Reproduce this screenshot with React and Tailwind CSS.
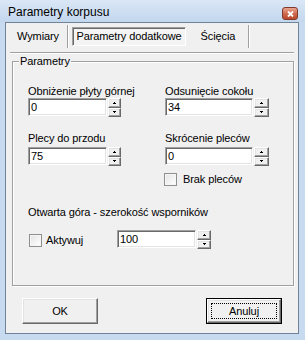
// Parametry korpusu – klasyczne okno dialogowe
const raised =
  "border border-t-white border-l-white border-r-[#696969] border-b-[#696969] shadow-[inset_-1px_-1px_0_#a0a0a0,inset_1px_1px_0_#e3e3e3]";

function Arrow({ up }) {
  return (
    <svg width="3" height="2" viewBox="0 0 3 2" shapeRendering="crispEdges">
      {up ? (
        <>
          <rect x="1" y="0" width="1" height="1" fill="#000" />
          <rect x="0" y="1" width="3" height="1" fill="#000" />
        </>
      ) : (
        <>
          <rect x="0" y="0" width="3" height="1" fill="#000" />
          <rect x="1" y="1" width="1" height="1" fill="#000" />
        </>
      )}
    </svg>
  );
}

function Spin({ value, editW, spinW, className = "" }) {
  return (
    <div className={"flex items-start gap-[1px] " + className}>
      <div
        className={
          editW +
          " h-[18px] flex items-center pl-[2px] bg-white border border-t-[#a0a0a0] border-l-[#a0a0a0] border-b-white border-r-white shadow-[inset_1px_1px_0_#696969,inset_-1px_-1px_0_#e3e3e3]"
        }
      >
        {value}
      </div>
      <div className={spinW + " h-[19px] flex flex-col"}>
        <div className={"flex-1 flex items-center justify-center bg-[#f0f0f0] " + raised}>
          <Arrow up />
        </div>
        <div className={"flex-1 flex items-center justify-center bg-[#f0f0f0] " + raised}>
          <Arrow />
        </div>
      </div>
    </div>
  );
}

function Check({ label, gap }) {
  return (
    <div className={"flex items-center " + gap}>
      <span className="w-[13px] h-[13px] border border-[#8e8f8f] bg-gradient-to-br from-[#e4e4e4] to-white shadow-[inset_0_0_0_1px_#f6f6f6]" />
      <span>{label}</span>
    </div>
  );
}

function Sep({ className = "" }) {
  return (
    <div
      className={
        "w-[2px] h-[23px] border-l border-l-[#a0a0a0] border-r border-r-white " + className
      }
    />
  );
}

export default function App() {
  return (
    <div className="w-[305px] h-[340px] overflow-hidden bg-[#c8daef] font-['Liberation_Sans',Arial,sans-serif] text-black">
      {/* pasek tytułu */}
      <div className="h-[22px] flex justify-between bg-gradient-to-b from-[#dae7f6] to-[#c3d7ed]">
        <span className="pl-[8px] pt-[5px] text-[12px] leading-[15px]">Parametry korpusu</span>
        <div className="mt-[7px] mr-[7px] w-[16px] h-[13px] rounded-[3px] border border-[#83392a] bg-gradient-to-b from-[#e9a591] via-[#d06a51] to-[#b9472c] flex items-center justify-center">
          <svg width="7" height="6" viewBox="0 0 7 6">
            <path d="M1 0.5L6 5.5M6 0.5L1 5.5" stroke="#fff" strokeWidth="1.8" />
          </svg>
        </div>
      </div>

      <div className="ml-[5px] w-[294px] h-[312px] border border-[#71839a] bg-[#f0f0f0] text-[11px] leading-[13px] tracking-[-0.1px]">
        {/* zakładki */}
        <div className="mt-[2px] ml-[3px] h-[23px] flex items-center">
          <div className="w-[58px] h-[19px] flex items-center justify-center">Wymiary</div>
          <Sep />
          <div className="ml-[3px] w-[114px] h-[19px] flex items-center justify-center bg-[#f4f4f4] border border-t-[#a0a0a0] border-l-[#a0a0a0] border-b-white border-r-white shadow-[inset_1px_1px_0_#696969]">
            Parametry dodatkowe
          </div>
          <div className="ml-[3px] w-[58px] h-[19px] flex items-center justify-center">Ścięcia</div>
          <Sep className="ml-[1px]" />
        </div>
        <div className="mt-[4px] ml-[4px] w-[284px] h-[2px] border-t border-t-[#a0a0a0] border-b border-b-white" />

        <fieldset className="mt-[1px] ml-[6px] w-[282px] h-[231px] border border-[#a0a0a0] shadow-[inset_1px_1px_0_#fff,1px_1px_0_#fff]">
          <legend className="ml-[6px] px-[1px] leading-[13px] bg-[#f0f0f0]">Parametry</legend>

          <div className="pt-[17px] pl-[15px] grid grid-cols-[137px_1fr]">
            <div>
              <div>Obniżenie płyty górnej</div>
              <Spin value="0" editW="w-[79px]" spinW="w-[13px]" />
              <div className="mt-[15px]">Plecy do przodu</div>
              <Spin className="mt-[2px]" value="75" editW="w-[79px]" spinW="w-[13px]" />
            </div>
            <div>
              <div>Odsunięcie cokołu</div>
              <Spin value="34" editW="w-[88px]" spinW="w-[15px]" />
              <div className="mt-[15px]">Skrócenie pleców</div>
              <Spin className="mt-[2px]" value="0" editW="w-[88px]" spinW="w-[15px]" />
              <div className="mt-[7px] -ml-[1px]">
                <Check label="Brak pleców" gap="gap-[6px]" />
              </div>
            </div>
          </div>

          <div className="mt-[20px] pl-[15px]">Otwarta góra - szerokość wsporników</div>
          <div className="mt-[11px] pl-[16px] flex items-start">
            <div className="mt-[4px] w-[88px]">
              <Check label="Aktywuj" gap="gap-[4px]" />
            </div>
            <Spin value="100" editW="w-[79px]" spinW="w-[14px]" />
          </div>
        </fieldset>

        {/* przyciski */}
        <div className="mt-[12px] px-[16px] flex justify-between">
          <button className={"w-[76px] h-[26px] flex items-center justify-center bg-[#f0f0f0] " + raised}>
            OK
          </button>
          <button className="w-[76px] h-[26px] border border-black bg-[#f0f0f0]">
            <div className={"w-full h-full p-[3px] " + raised}>
              <div className="w-full h-full flex items-center justify-center border border-dotted border-black">
                Anuluj
              </div>
            </div>
          </button>
        </div>
      </div>
    </div>
  );
}
